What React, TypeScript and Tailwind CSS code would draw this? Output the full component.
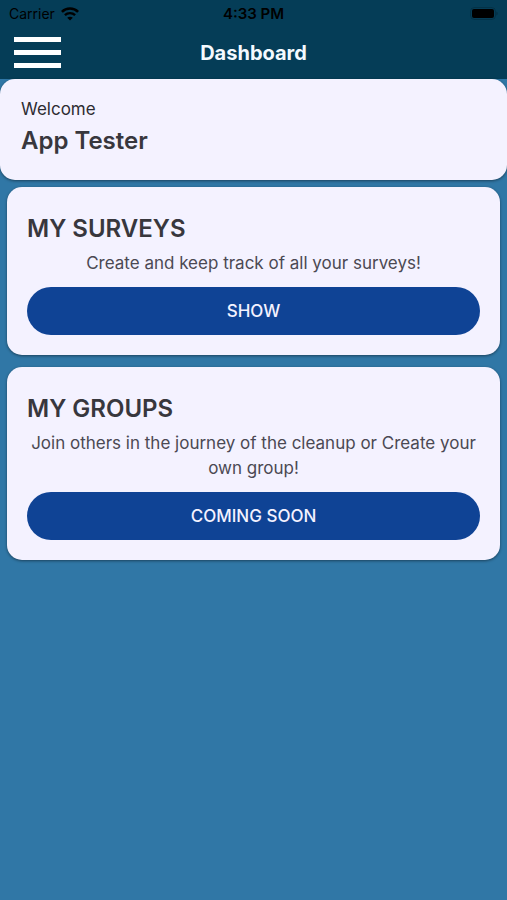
function StatusBar() {
  return (
    <div className="grid h-[27px] grid-cols-[1fr_auto_1fr] items-center px-[9px] text-black">
      <div className="flex items-center gap-[6px]">
        <span className="text-[14px] leading-[20px]">Carrier</span>
        <svg className="h-[14px] w-[18px]" viewBox="0 0 18 14" fill="none" aria-label="Wi-Fi">
          <path d="M.9 4.9C5.3.4 12.7.4 17.1 4.9" stroke="currentColor" strokeWidth="2.6" />
          <path d="M3.9 8.1c2.8-2.7 7.4-2.7 10.2 0" stroke="currentColor" strokeWidth="2.4" />
          <path d="M9 13.6 6.2 10.7c1.5-1.4 4.1-1.4 5.6 0Z" fill="currentColor" />
        </svg>
      </div>
      <span className="text-center text-[15px] leading-[20px] font-semibold">4:33 PM</span>
      <svg className="h-[14px] w-[28px] justify-self-end" viewBox="0 0 28 14" aria-label="Battery">
        <rect x=".5" y=".5" width="25" height="12" rx="4" fill="none" stroke="#000" strokeOpacity=".18" />
        <rect x="2" y="2" width="22" height="9" rx="2" fill="#000" />
        <path d="M26.5 4.5c1.4.6 1.4 3.4 0 4Z" fill="#000" fillOpacity=".3" />
      </svg>
    </div>
  );
}

type CardProps = { title: string; text: string; action: string };

function Card({ title, text, action }: CardProps) {
  return (
    <section className="rounded-[15px] bg-[#f4f2ff] px-5 pt-[25px] pb-5 shadow-[0_1px_3px_rgba(0,0,0,0.45)]">
      <h2 className="text-[24px] leading-[34px] font-semibold text-[#38373d]">{title}</h2>
      <p className="mt-[5px] mb-[11px] text-center text-[17px] leading-[25px] text-[#4b4953]">{text}</p>
      <button
        type="button"
        className="h-[48px] w-full rounded-full bg-[#0f4395] text-[17px] leading-[24px] font-medium text-[#f4f2ff]"
      >
        {action}
      </button>
    </section>
  );
}

export default function App() {
  return (
    <div className="min-h-screen bg-[#3077a6] font-['Inter','Liberation_Sans',sans-serif]">
      <header className="bg-[#053d57]">
        <StatusBar />
        <div className="grid h-[52px] grid-cols-[1fr_auto_1fr] items-center px-[14px]">
          <button type="button" aria-label="Open menu" className="flex w-[47px] flex-col gap-[8px] pb-[2px]">
            <span className="h-[5px] bg-white" />
            <span className="h-[5px] bg-white" />
            <span className="h-[5px] bg-white" />
          </button>
          <h1 className="text-[20px] leading-[28px] font-bold text-[#f4faff]">Dashboard</h1>
        </div>
      </header>
      <main>
        <section className="rounded-[15px] bg-[#f4f2ff] px-[21px] pt-[18px] pb-[22px] shadow-[0_1px_3px_rgba(0,0,0,0.45)]">
          <p className="text-[17px] leading-[25px] text-[#2d2c32]">Welcome</p>
          <p className="mt-[2px] text-[24px] leading-[34px] font-semibold text-[#38373d]">App Tester</p>
        </section>
        <div className="flex flex-col gap-3 px-[7px] pt-[7px]">
          <Card title="MY SURVEYS" text="Create and keep track of all your surveys!" action="SHOW" />
          <Card
            title="MY GROUPS"
            text="Join others in the journey of the cleanup or Create your own group!"
            action="COMING SOON"
          />
        </div>
      </main>
    </div>
  );
}
